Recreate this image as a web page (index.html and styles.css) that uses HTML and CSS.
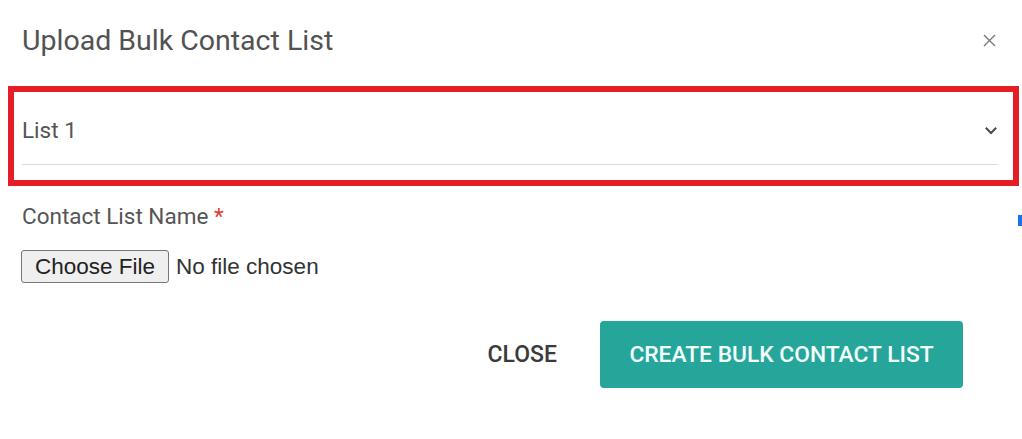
FILE: index.html
```html
<!DOCTYPE html>
<html lang="en">
<head>
    <meta charset="UTF-8">
    <meta name="viewport" content="width=device-width, initial-scale=1.0">
    <title>Upload Bulk Contact List</title>
    <link rel="stylesheet" href="styles.css">
</head>
<body>
    <div class="modal">
        <header class="modal-header">
            <h1>Upload Bulk Contact List</h1>
            <button class="btn-x" type="button" aria-label="Close">
                <svg width="13" height="13" viewBox="0 0 13 13">
                    <path d="M1 1 L12 12 M12 1 L1 12" stroke="#7a7a7a" stroke-width="1.4" fill="none"/>
                </svg>
            </button>
        </header>

        <div class="highlight">
            <div class="select">
                <span>List 1</span>
                <svg width="14" height="9" viewBox="0 0 14 9">
                    <path d="M1.8 1.8 L7 7 L12.2 1.8" stroke="#4a4a4a" stroke-width="2" fill="none"/>
                </svg>
            </div>
        </div>

        <label class="field-label" for="arquivo">Contact List Name <span class="obrigatorio">*</span></label>
        <input type="file" id="arquivo" class="file-input">

        <div class="acoes">
            <button type="button" class="btn-close">CLOSE</button>
            <button type="button" class="btn-create">CREATE BULK CONTACT LIST</button>
        </div>
    </div>
    <span class="marcador"></span>
</body>
</html>
```

FILE: styles.css
```css
*{
    margin: 0;
    padding: 0;
    box-sizing: border-box;
    font-family: 'Roboto', sans-serif;
}

body {
    background-color: #fff;
    width: 1022px;
    height: 439px;
    overflow: hidden;
}

.modal{
    padding: 0 24px 0 22px;
}

.modal-header{
    display: flex;
    justify-content: space-between;
    align-items: center;
    padding-top: 24px;
    margin-bottom: 29px;
}

.modal-header h1{
    font-size: 28.5px;
    line-height: 33px;
    font-weight: 400;
    color: #525252;
}

.btn-x{
    background: none;
    border: none;
    width: 13px;
    height: 13px;
    margin-right: 2px;
    display: flex;
}

.highlight{
    margin: 0 -21px 0 -14px;
    border: 6px solid #e41e26;
    padding: 0 15px 15px 8px;
}

.select{
    display: flex;
    justify-content: space-between;
    align-items: center;
    padding: 25px 0 21px;
    border-bottom: 1px solid #dcdcdc;
    font-size: 22.5px;
    line-height: 26px;
    color: #555;
}

.field-label{
    display: block;
    margin-top: 17px;
    font-size: 22.5px;
    line-height: 26px;
    color: #555;
}

.obrigatorio{
    color: #e53935;
}

.file-input{
    display: block;
    margin-top: 21px;
    margin-left: -1px;
    font-family: 'Liberation Sans', Arial, sans-serif;
    font-size: 22.5px;
    color: #333;
}

.file-input::file-selector-button{
    font-family: 'Liberation Sans', Arial, sans-serif;
    font-size: 22.5px;
    height: 33px;
    padding: 0 13px;
    margin-right: 7px;
    background-color: #efefef;
    border: 1px solid #767676;
    border-radius: 3px;
    color: #222;
}

.acoes{
    display: flex;
    justify-content: flex-end;
    align-items: center;
    margin-top: 38px;
    margin-right: 35px;
}

.btn-close{
    background: none;
    border: none;
    font-size: 23px;
    font-weight: 500;
    color: #3a3a3a;
    padding: 0 22px;
    height: 67px;
    margin-right: 21px;
    cursor: pointer;
}

.btn-create{
    background-color: #26a69a;
    color: #f2fffd;
    border: none;
    border-radius: 4px;
    font-size: 22.8px;
    font-weight: 500;
    width: 363px;
    height: 67px;
    cursor: pointer;
}

.marcador{
    position: absolute;
    left: 1018px;
    top: 215px;
    width: 4px;
    height: 11px;
    background-color: #1a73e8;
}
```
